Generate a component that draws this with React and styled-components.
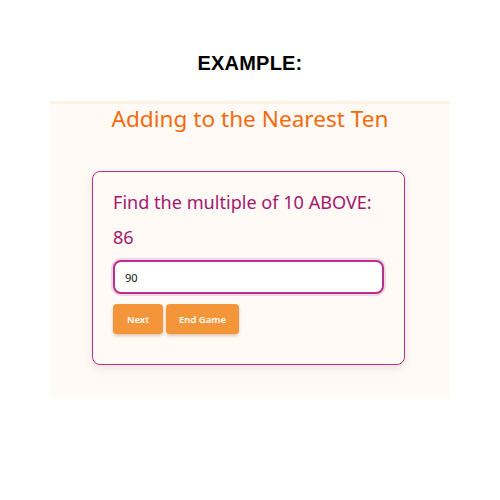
import React, { useState } from 'react';
import styled, { createGlobalStyle } from 'styled-components';

const GlobalStyle = createGlobalStyle`
  html, body {
    margin: 0;
    padding: 0;
    background: #ffffff;
  }
  body {
    font-family: 'Noto Sans', 'Open Sans', sans-serif;
  }
`;

const Page = styled.div`
  width: 500px;
  height: 500px;
  display: flex;
  flex-direction: column;
  align-items: center;
  box-sizing: border-box;
  padding-top: 50px;
`;

const Heading = styled.h1`
  margin: 0;
  font-family: 'Liberation Sans', Arial, sans-serif;
  font-weight: 700;
  font-size: 20px;
  line-height: 26px;
  color: #000;
  letter-spacing: 0.2px;
`;

const Panel = styled.section`
  margin-top: 25px;
  width: 400px;
  height: 297px;
  box-sizing: border-box;
  background: #fffaf5;
  border-top: 3px solid #fdf3e2;
  display: flex;
  flex-direction: column;
  align-items: center;
`;

const Title = styled.h2`
  margin: 0;
  font-weight: 400;
  font-size: 22.6px;
  line-height: 30px;
  color: #f76a0c;
`;

const Card = styled.div`
  margin-top: 37px;
  margin-left: 42px;
  align-self: flex-start;
  width: 313px;
  height: 194px;
  box-sizing: border-box;
  border: 1.5px solid #b8308f;
  border-radius: 8px;
  background: #fffaf5;
  box-shadow: 0 3px 8px rgba(120, 60, 40, 0.12);
  padding: 15px 20px 0;
  display: flex;
  flex-direction: column;
  align-items: flex-start;
`;

const Prompt = styled.p`
  margin: 0;
  font-size: 18.1px;
  line-height: 30px;
  color: #a3186f;
`;

const Number = styled.p`
  margin: 5px 0 0;
  font-size: 18.1px;
  line-height: 30px;
  color: #a3186f;
`;

const Answer = styled.input`
  margin-top: 8px;
  width: 271px;
  height: 34px;
  box-sizing: border-box;
  border: 2px solid #b8308f;
  border-radius: 8px;
  background: #ffffff;
  box-shadow: 0 0 0 2px #f1d6e6;
  padding: 0 10px;
  font-family: 'Noto Sans', sans-serif;
  font-size: 11px;
  color: #111;
  outline: none;
`;

const Buttons = styled.div`
  margin-top: 10px;
  display: flex;
  gap: 3px;
`;

const Button = styled.button`
  width: ${({ wide }) => (wide ? '73px' : '50px')};
  height: 30px;
  border: none;
  border-radius: 4px;
  background: #f39538;
  color: #fff;
  font-family: 'Noto Sans', sans-serif;
  font-weight: 600;
  font-size: 9.5px;
  box-shadow: 0 2px 3px rgba(150, 80, 20, 0.3);
  cursor: pointer;
`;

function App() {
  const [answer, setAnswer] = useState('90');

  return (
    <Page>
      <GlobalStyle />
      <Heading>EXAMPLE:</Heading>
      <Panel>
        <Title>Adding to the Nearest Ten</Title>
        <Card>
          <Prompt>Find the multiple of 10 ABOVE:</Prompt>
          <Number>86</Number>
          <Answer value={answer} onChange={(e) => setAnswer(e.target.value)} />
          <Buttons>
            <Button>Next</Button>
            <Button wide>End Game</Button>
          </Buttons>
        </Card>
      </Panel>
    </Page>
  );
}

export default App;
